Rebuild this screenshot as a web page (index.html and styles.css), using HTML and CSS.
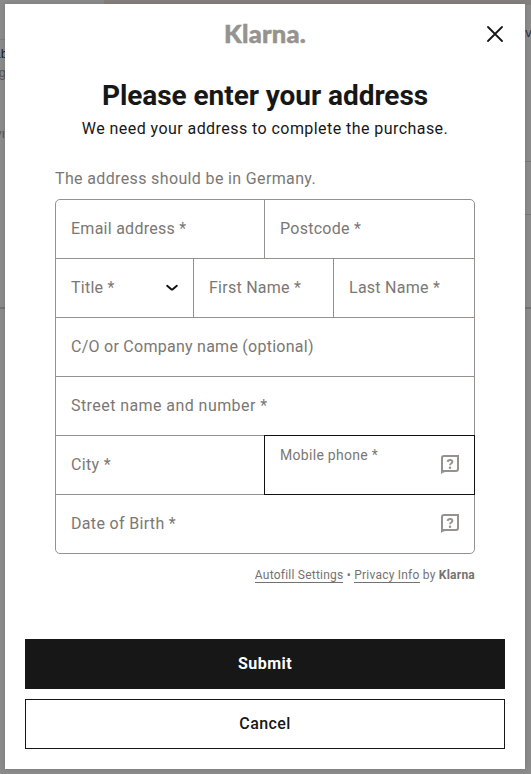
FILE: index.html
```html
<!DOCTYPE html>
<html lang="en">
<head>
<meta charset="utf-8">
<title>Klarna</title>
<link rel="stylesheet" href="styles.css">
</head>
<body>
<div class="backdrop" aria-hidden="true">
  <i class="band"></i>
  <i class="rule rule-left"></i>
  <b class="bit bit-name">ab</b>
  <span class="bit bit-sub">.g</span>
  <span class="bit bit-pay">yı</span>
  <b class="bit bit-right">av</b>
  <i class="rule rule-r1"></i>
  <i class="rule rule-r2"></i>
  <i class="rule rule-wide"></i>
</div>
<main class="modal">
  <header class="top">
    <span class="logo">Klarna.</span>
    <button class="close" aria-label="Close"><svg width="16" height="16" viewBox="0 0 16 16"><path d="M1 1l14 14M15 1L1 15"/></svg></button>
  </header>
  <h1>Please enter your address</h1>
  <p class="lead">We need your address to complete the purchase.</p>
  <section class="content">
    <p class="note">The address should be in Germany.</p>
    <form class="form">
      <div class="row"><label class="cell email">Email address *</label><label class="cell postcode">Postcode *</label></div>
      <div class="row">
        <label class="cell title">Title *<svg class="chevron" width="12" height="8" viewBox="0 0 12 8"><path d="M1.2 1.8L5.2 5.2Q6 5.8 6.8 5.2L10.8 1.8"/></svg></label>
        <label class="cell first">First Name *</label>
        <label class="cell last">Last Name *</label>
      </div>
      <div class="row"><label class="cell company">C/O or Company name (optional)</label></div>
      <div class="row"><label class="cell street">Street name and number *</label></div>
      <div class="row">
        <label class="cell city">City *</label>
        <label class="cell focused"><span class="small">Mobile phone *</span><svg class="help" width="20" height="20" viewBox="0 0 20 20"><path class="bubble" d="M2 16V3Q2 1 4 1H18V14Q18 16 16 16H5Q3.2 16 2 17"/><path class="tail" d="M1 15H5V17Q2.5 17 1 19.2Z"/><path class="mark" d="M7.6 6.8Q7.9 5 10.1 5T12.4 6.8Q12.4 7.8 11.2 8.5T10 10.3"/><circle cx="10" cy="12.7" r="1.25"/></svg></label>
      </div>
      <div class="row"><label class="cell birth">Date of Birth *<svg class="help" width="20" height="20" viewBox="0 0 20 20"><path class="bubble" d="M2 16V3Q2 1 4 1H18V14Q18 16 16 16H5Q3.2 16 2 17"/><path class="tail" d="M1 15H5V17Q2.5 17 1 19.2Z"/><path class="mark" d="M7.6 6.8Q7.9 5 10.1 5T12.4 6.8Q12.4 7.8 11.2 8.5T10 10.3"/><circle cx="10" cy="12.7" r="1.25"/></svg></label></div>
    </form>
    <p class="legal"><a>Autofill Settings</a> • <a>Privacy Info</a> by <b>Klarna</b></p>
  </section>
  <footer class="actions">
    <button class="btn primary">Submit</button>
    <button class="btn">Cancel</button>
  </footer>
</main>
</body>
</html>
```
FILE: styles.css
```css
* { box-sizing: border-box; }
body { margin: 0; width: 531px; height: 774px; overflow: hidden; padding: 4px 6px 5px 5px; background: #8c8c8c; font-family: Roboto, "Liberation Sans", sans-serif; color: #171717; position: relative; }
h1, p { margin: 0; }
button { font: inherit; color: inherit; padding: 0; }
.backdrop > * { position: absolute; }
.band { left: 104px; right: 0; top: 0; height: 5px; background: #84807d; }
.rule { height: 1px; background: #777; }
.rule-left { left: 0; width: 5px; top: 39px; background: #7e7e7e; }
.rule-r1 { right: 0; width: 6px; top: 161px; }
.rule-r2 { right: 0; width: 6px; top: 214px; }
.rule-wide { left: 0; right: 0; top: 307px; height: 2px; background: #747474; }
.bit { font: 13px/14px "Liberation Sans", sans-serif; color: #555; }
.bit-name { right: 523px; top: 47px; font-weight: normal; color: #1c1c2c; }
.bit-sub { right: 525px; top: 66px; }
.bit-pay { right: 526px; top: 127px; }
.bit-right { left: 518px; top: 26px; font-weight: normal; color: #303048; }
.modal { position: relative; width: 520px; height: 765px; background: #fff; box-shadow: 0 0 6px rgba(0,0,0,.14); display: flex; flex-direction: column; }
.top { height: 60px; display: flex; justify-content: center; position: relative; }
.logo { margin-top: 15px; height: 28px; font: 900 25.5px/28px Lato, sans-serif; letter-spacing: .2px; color: #96938f; -webkit-text-stroke: .5px #96938f; }
.close { position: absolute; right: 22px; top: 22px; width: 16px; height: 16px; border: 0; background: none; }
.close svg, .chevron, .help { display: block; }
.close path { stroke: #171717; stroke-width: 1.8; stroke-linecap: round; }
h1 { margin-top: 14px; text-align: center; font-size: 28px; line-height: 36px; font-weight: 700; letter-spacing: -.06px; white-space: nowrap; }
.lead { margin-top: 3px; text-align: center; font-size: 16px; line-height: 24px; letter-spacing: .44px; }
.content { margin: 26px 50px 0; }
.note { color: #7b7774; font-size: 16px; line-height: 24px; letter-spacing: .36px; }
.form { margin-top: 8px; border: 1px solid #94918f; border-radius: 5px; }
.row { display: flex; height: 59px; border-top: 1px solid #94918f; }
.row:first-child { height: 58px; border-top: 0; }
.cell { flex: 1; display: flex; align-items: center; justify-content: space-between; padding: 0 14px 0 15px; color: #7b7774; font-size: 16px; line-height: 24px; letter-spacing: .26px; white-space: nowrap; }
.cell + .cell { border-left: 1px solid #94918f; }
.email, .city { flex: 0 0 208px; }
.title { flex: 0 0 137px; padding-right: 15px; }
.first { flex: 0 0 140px; }
.street { letter-spacing: .43px; }
.city, .birth { letter-spacing: .33px; }
.chevron path { fill: none; stroke: #111; stroke-width: 2; stroke-linecap: round; }
.cell.focused { margin: -1px -1px -1px 0; border: 1px solid #111; }
.small { font-size: 14px; align-self: flex-start; margin-top: 7px; letter-spacing: .3px; }
.help { color: #94918f; fill: currentColor; }
.help .bubble { fill: none; stroke: currentColor; stroke-width: 2; }
.help .mark { fill: none; stroke: currentColor; stroke-width: 1.9; }
.legal { margin-top: 12px; text-align: right; font-size: 12px; line-height: 18px; letter-spacing: .23px; color: #767270; }
.legal a { border-bottom: 1px solid #767270; }
.actions { margin: auto 20px 20px; display: grid; gap: 10px; }
.btn { height: 50px; border: 1px solid #171717; background: #fff; font-size: 16px; font-weight: 500; letter-spacing: .4px; padding-bottom: 2px; }
.primary { background: #171717; color: #fff; font-weight: 700; letter-spacing: .45px; }
```
